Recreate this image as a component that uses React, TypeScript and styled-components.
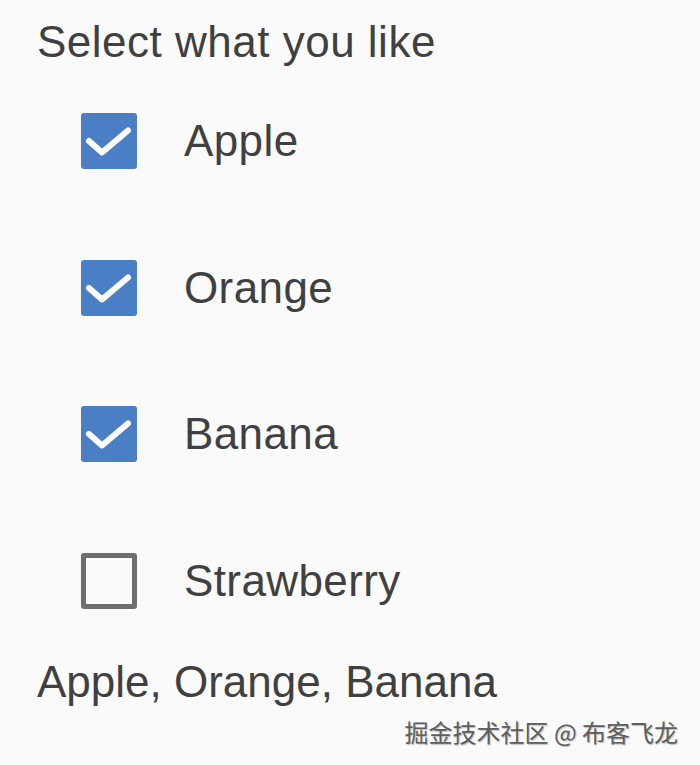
import styled, { createGlobalStyle } from 'styled-components'
import { useState } from 'react'

const FRUITS = ['Apple', 'Orange', 'Banana', 'Strawberry']

const GlobalStyle = createGlobalStyle`
  html, body {
    margin: 0;
    padding: 0;
    background: #fafafa;
  }
  body {
    font-family: 'Liberation Sans', Arial, sans-serif;
    color: #404040;
    height: 765px;
    overflow: hidden;
  }
`

// ── Layout ───────────────────────────────────────────────────────────────────

const Page = styled.div`
  position: relative;
  height: 765px;
  display: flex;
  flex-direction: column;
`

const Heading = styled.h1`
  margin: 0;
  padding: 16px 0 0 37px;
  font-size: 44px;
  font-weight: 400;
  line-height: 52px;
  letter-spacing: 0.5px;
`

const List = styled.div`
  display: flex;
  flex-direction: column;
`

const Row = styled.label`
  display: flex;
  align-items: center;
  gap: 47px;
  height: 146.5px;
  padding-left: 81px;
  cursor: pointer;
`

const Box = styled.span<{ $checked: boolean }>`
  box-sizing: border-box;
  width: 56px;
  height: 56px;
  flex: none;
  border-radius: 3px;
  display: flex;
  align-items: center;
  justify-content: center;
  background: ${({ $checked }) => ($checked ? '#4a7fc6' : 'transparent')};
  border: ${({ $checked }) => ($checked ? 'none' : '5px solid #6e6e6e')};
`

const Label = styled.span`
  font-size: 44px;
  line-height: 52px;
  letter-spacing: 0.4px;
`

const Summary = styled.p`
  margin: 2px 0 0;
  padding-left: 37px;
  font-size: 44px;
  line-height: 52px;
`

const Watermark = styled.div`
  position: absolute;
  right: 22px;
  bottom: 18px;
  font-family: 'Noto Sans CJK SC', sans-serif;
  font-size: 24px;
  line-height: 30px;
  color: #5e5e5e;
  text-shadow: 1px 1px 1px rgba(0, 0, 0, 0.25), -1px -1px 0 #fff;
`

// ── Component ────────────────────────────────────────────────────────────────

export default function App() {
  const [checked, setChecked] = useState<string[]>(['Apple', 'Orange', 'Banana'])

  const toggle = (fruit: string) => {
    setChecked(c => (c.includes(fruit) ? c.filter(f => f !== fruit) : [...c, fruit]))
  }

  return (
    <Page>
      <GlobalStyle />
      <Heading>Select what you like</Heading>
      <List>
        {FRUITS.map(fruit => {
          const on = checked.includes(fruit)
          return (
            <Row key={fruit} onClick={() => toggle(fruit)}>
              <Box $checked={on}>
                {on && (
                  <svg width="56" height="56" viewBox="0 0 56 56">
                    <path d="M8 28 L21 39.5 L47 17.5" fill="none" stroke="#fff" strokeWidth="6" strokeLinecap="round" strokeLinejoin="round" />
                  </svg>
                )}
              </Box>
              <Label>{fruit}</Label>
            </Row>
          )
        })}
      </List>
      <Summary>{FRUITS.filter(f => checked.includes(f)).join(', ')}</Summary>
      <Watermark>掘金技术社区 @ 布客飞龙</Watermark>
    </Page>
  )
}
